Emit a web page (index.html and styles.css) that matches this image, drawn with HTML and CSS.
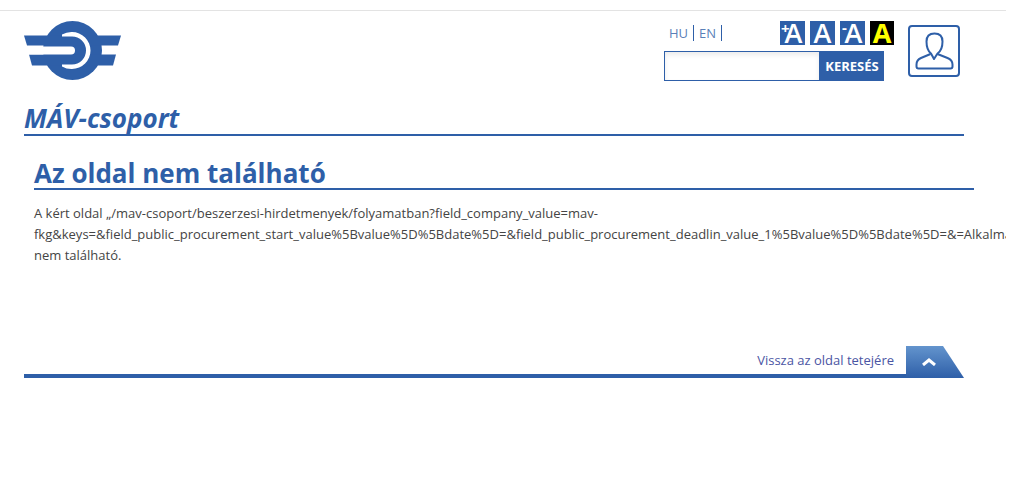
FILE: index.html
```html
<!DOCTYPE html>
<html lang="hu">
<head>
  <meta charset="UTF-8">
  <meta name="viewport" content="width=device-width, initial-scale=1.0">
  <title>Az oldal nem található | MÁV-csoport</title>
  <link rel="stylesheet" href="styles.css">
</head>
<body>
<div class="page">
  <!-- Header -->
  <header class="site-header">
    <a class="logo" href="#">
      <svg width="97" height="60" viewBox="24 20 97 60">
        <circle cx="72.5" cy="50.500" r="29.500" fill="#2e5fa8"/>
        <path d="M24 35.500H121L118 45.500H27Z" fill="#2e5fa8"/>
        <path d="M29 54.500H116L113 65.500H32Z" fill="#2e5fa8"/>
        <path d="M24 46.500H71A4 4 0 0 1 71 54.500H24Z" fill="#fff"/>
        <path d="M62 34.500A19 19 0 0 1 72 32A18.500 18.500 0 0 1 72 69A19 19 0 0 1 62 66.500V64.500H72A14 14 0 0 0 72 36.500H62Z" fill="#fff"/>
      </svg>
    </a>
    <div class="header-tools">
      <div class="tools-top">
        <ul class="lang">
          <li><a href="#">HU</a></li>
          <li><a href="#">EN</a></li>
        </ul>
        <div class="font-size">
          <a href="#" class="fs-btn fs-marked"><span class="fs-mark fs-plus">+</span>A</a>
          <a href="#" class="fs-btn">A</a>
          <a href="#" class="fs-btn fs-marked"><span class="fs-mark fs-minus">-</span>A</a>
          <a href="#" class="fs-btn fs-contrast">A</a>
        </div>
      </div>
      <form class="search">
        <input type="text" aria-label="Keresés">
        <button type="button">KERESÉS</button>
      </form>
    </div>
    <a class="user-box" href="#">
      <svg width="48" height="48" viewBox="0 0 48 48" fill="none" stroke="#2e5fa8" stroke-width="2" stroke-linejoin="round">
        <path d="M24.500 6.500C19 6.500 16.500 10 16.500 14.500C16.500 19.500 18.500 24.500 21 26.500L24 32L27.500 26.500C30.500 24.500 32.500 19.500 32.500 14.500C32.500 10 30 6.500 24.500 6.500Z"/>
        <path d="M20.500 27L11 31C7.500 32.500 6.500 35 6.500 37.500V39.500C6.500 40.500 7.300 41.500 8.500 41.500H40.500C41.700 41.500 42.500 40.500 42.500 39.500V37.500C42.500 35 41 32.500 37.500 31L27.500 27"/>
      </svg>
    </a>
  </header>

  <h2 class="section-title">MÁV-csoport</h2>

  <main class="content">
    <h1>Az oldal nem található</h1>
    <p>A kért oldal „/mav-csoport/beszerzesi-hirdetmenyek/folyamatban?field_company_value=mav-fkg&amp;keys=&amp;field_public_procurement_start_value%5Bvalue%5D%5Bdate%5D=&amp;field_public_procurement_deadlin_value_1%5Bvalue%5D%5Bdate%5D=&amp;=Alkalmaz%C3%A1s” nem található.</p>
  </main>

  <!-- Back to top -->
  <div class="to-top">
    <a href="#">Vissza az oldal tetejére</a>
    <span class="to-top-tab">
      <svg width="14" height="8" viewBox="0 0 14 8" fill="none" stroke="#fff" stroke-width="3"><path d="M1 7L7 2L13 7"/></svg>
    </span>
  </div>
</div>
</body>
</html>
```

FILE: styles.css
```css
html, body {
  margin: 0;
  background: #fff;
}

body {
  font-family: "Open Sans", sans-serif;
  font-size: 13px;
  color: #444;
  overflow: hidden;
}

a { text-decoration: none; }

.page {
  width: 1006px;
  height: 482px;
  box-sizing: border-box;
  margin-top: 10px;
  border-top: 1px solid #e3e3e3;
  padding: 0 42px 0 24px;
  overflow: hidden;
}

/* Header */
.site-header {
  display: flex;
  align-items: flex-start;
  height: 91px;
}

.logo {
  display: block;
  margin-top: 9px;
  height: 60px;
}

.header-tools {
  width: 230px;
  margin-left: 543px;
  margin-top: 10px;
}

.tools-top {
  display: flex;
  justify-content: space-between;
  height: 30px;
}

.lang {
  display: flex;
  list-style: none;
  margin: 4px 0 0 0;
  padding: 0 0 0 5px;
}
.lang li {
  height: 16px;
  line-height: 16px;
  padding-right: 5px;
  margin-right: 5px;
  border-right: 1px solid #2e5fa8;
}
.lang a { color: #5a7fb8; font-size: 13px; }

.font-size {
  display: flex;
  gap: 5px;
}
.fs-btn {
  position: relative;
  display: block;
  width: 25px;
  height: 24px;
  box-sizing: border-box;
  background: #2e5fa8;
  color: #fff;
  font-size: 27px;
  font-weight: 600;
  line-height: 23px;
  text-align: center;
}
.fs-marked { padding-left: 2px; }
.fs-contrast {
  background: #000;
  color: #ff0;
  width: 24px;
  font-weight: 700;
}
.fs-mark {
  position: absolute;
  left: 1px;
  top: 1px;
  font-size: 15px;
  font-weight: 700;
  line-height: 13px;
}
.fs-minus { left: 2px; top: 0; }

.search {
  display: flex;
  width: 220px;
  height: 30px;
}
.search input {
  width: 155px;
  height: 30px;
  box-sizing: border-box;
  border: 1px solid #2e5fa8;
  border-right: none;
  padding: 0 6px;
  box-shadow: inset 0 3px 5px rgba(0,0,0,0.08);
  outline: none;
}
.search button {
  width: 65px;
  border: none;
  padding: 0 0 0 1px;
  background: #2e5fa8;
  color: #fff;
  font-family: "Open Sans", sans-serif;
  font-size: 13px;
  font-weight: 700;
}

.user-box {
  display: flex;
  align-items: center;
  justify-content: center;
  width: 52px;
  height: 52px;
  box-sizing: border-box;
  margin-top: 14px;
  margin-left: 14px;
  border: 2px solid #2e5fa8;
  border-radius: 4px;
}

/* Titles */
.section-title {
  margin: 0;
  height: 32px;
  line-height: 32px;
  font-size: 26px;
  font-style: italic;
  font-weight: 700;
  color: #2e5fa8;
  border-bottom: 2px solid #2e5fa8;
}

.content {
  padding-left: 10px;
  margin-right: -10px;
}
.content h1 {
  margin: 18px 0 0 0;
  height: 34px;
  line-height: 38px;
  font-size: 26px;
  font-weight: 700;
  color: #2e5fa8;
  border-bottom: 2px solid #2e5fa8;
}
.content p {
  margin: 13px 0 0 0;
  line-height: 21px;
}

/* Back to top */
.to-top {
  display: flex;
  justify-content: flex-end;
  align-items: center;
  height: 32px;
  margin-top: 80px;
  position: relative;
}
.to-top::after {
  content: "";
  position: absolute;
  left: 0;
  right: 58px;
  bottom: 0;
  height: 4px;
  background: #2e5fa8;
}
.to-top a {
  color: #4a55a3;
  font-size: 13px;
  margin-right: 12px;
  padding-bottom: 4px;
}
.to-top-tab {
  position: relative;
  z-index: 1;
  display: flex;
  align-items: center;
  justify-content: flex-start;
  width: 58px;
  height: 32px;
  box-sizing: border-box;
  padding: 0 0 0 16px;
  background: linear-gradient(#6394cd, #2e5fa8);
  clip-path: polygon(0 0, 37px 0, 100% 100%, 0 100%);
}
```
